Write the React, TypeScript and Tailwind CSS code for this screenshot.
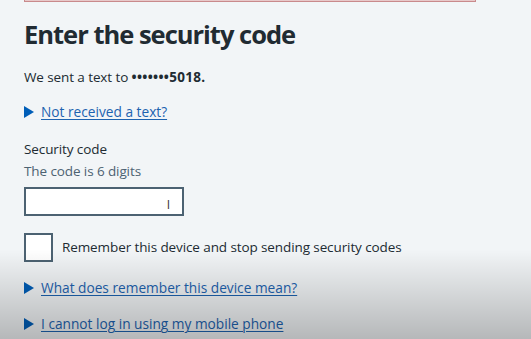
import React from 'react';

const Triangle = () => (
  <svg width="10" height="12" viewBox="0 0 10 12" className="shrink-0">
    <path d="M0 0 L10 6 L0 12 Z" fill="#005eb8" />
  </svg>
);

const DetailsLink: React.FC<{ label: string }> = ({ label }) => (
  <div className="flex items-center gap-[7px]">
    <Triangle />
    <a href="#" className="text-[13.7px] tracking-[0px] text-[#1d63b0] underline underline-offset-2 decoration-1">
      {label}
    </a>
  </div>
);

export default function App() {
  return (
    <div
      className="relative h-[339px] w-[531px] overflow-hidden bg-[#f2f5f7] text-[#212b32] text-[13.5px] tracking-[-0.1px]"
      style={{ fontFamily: '"Open Sans", "Noto Sans", sans-serif' }}
    >
      <div className="mx-[24px] h-[2px] w-[452px] border-x border-b border-[#c98a8c] bg-[#e8c9ca]" />
      <div className="px-[24px]">
        <h1 className="mt-[14px] text-[25.5px] font-bold leading-[36px] tracking-[-1px]">
          Enter the security code
        </h1>
        <p className="mt-[15px] leading-[20px]">
          We sent a text to <span className="font-bold tracking-[0.3px]">•••••••5018.</span>
        </p>
        <div className="mt-[15px]">
          <DetailsLink label="Not received a text?" />
        </div>
        <div className="mt-[16px] leading-[20px]">Security code</div>
        <div className="mt-[2px] leading-[20px] text-[#4c6272]">The code is 6 digits</div>
        <div className="mt-[6px] flex h-[29px] w-[160px] items-center justify-end border-2 border-[#4c6272] bg-white pr-[12px]">
          <span className="text-[12px] text-[#333] leading-none mt-[8px]">I</span>
        </div>
        <div className="mt-[17px] flex items-center gap-[9px]">
          <div className="h-[29px] w-[29px] border-2 border-[#4c6272] bg-white" />
          <span className="leading-[20px]">Remember this device and stop sending security codes</span>
        </div>
        <div className="mt-[16px]">
          <DetailsLink label="What does remember this device mean?" />
        </div>
        <div className="mt-[16px]">
          <DetailsLink label="I cannot log in using my mobile phone" />
        </div>
      </div>
      <div className="pointer-events-none absolute inset-x-0 bottom-0 h-[90px] bg-gradient-to-b from-transparent to-black/25" />
    </div>
  );
}
